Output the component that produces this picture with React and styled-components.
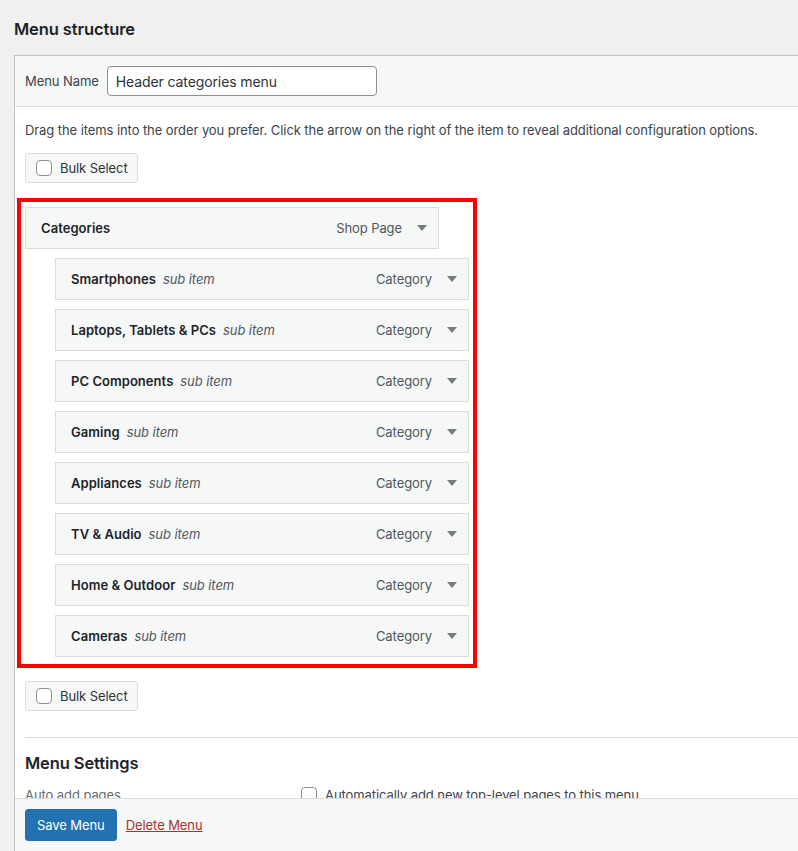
import React from "react";
import styled, { createGlobalStyle } from "styled-components";

const GlobalStyle = createGlobalStyle`
  html, body { margin: 0; padding: 0; }
  body {
    background: #f0f0f1;
    font-family: Inter, "Noto Sans", "Liberation Sans", sans-serif;
    font-size: 13px;
    letter-spacing: -0.08px;
    color: #3c434a;
    overflow: hidden;
  }
  * { box-sizing: border-box; }
`;

const Page = styled.div`
  height: 851px;
  display: flex;
  flex-direction: column;
  padding-left: 14px;
  overflow: hidden;
`;

const Title = styled.h2`
  margin: 18px 0 15px 0;
  font-size: 16.5px;
  line-height: 22px;
  font-weight: 600;
  letter-spacing: -0.1px;
  color: #1d2327;
`;

const Panel = styled.div`
  flex: 1;
  min-height: 0;
  display: flex;
  flex-direction: column;
  margin-right: -20px;
  border: 1px solid #c3c4c7;
  border-bottom: none;
  background: #fff;
`;

const Header = styled.div`
  display: flex;
  align-items: center;
  gap: 8px;
  padding: 10px;
  background: #f6f7f7;
  border-bottom: 1px solid #dcdcde;
`;

const Label = styled.label`
  font-size: 13px;
  color: #3c434a;
`;

const TextInput = styled.input`
  width: 270px;
  height: 30px;
  padding: 0 8px;
  border: 1px solid #8c8f94;
  border-radius: 4px;
  font-family: inherit;
  font-size: 14px;
  letter-spacing: -0.1px;
  color: #2c3338;
  background: #fff;
  outline: none;
`;

const Body = styled.div`
  flex: 1;
  min-height: 0;
  overflow: hidden;
  padding: 13px 0 0 10px;
`;

const Description = styled.p`
  margin: 0 0 13px;
  line-height: 20px;
  color: #3c434a;
`;

const BulkButton = styled.button`
  display: inline-flex;
  align-items: center;
  gap: 8px;
  height: 30px;
  padding: 0 9px 0 10px;
  background: #f6f7f7;
  border: 1px solid #dcdcde;
  border-radius: 3px;
  font-family: inherit;
  font-size: 13px;
  letter-spacing: -0.08px;
  color: #2c3338;
  margin-top: ${(p) => p.$top || 0}px;
`;

const Checkbox = styled.span`
  display: inline-block;
  width: 16px;
  height: 16px;
  border: 1px solid #8c8f94;
  border-radius: 4px;
  background: #fff;
  flex-shrink: 0;
`;

const Highlight = styled.div`
  width: 460px;
  margin: 15px 0 0 -8px;
  padding: 5px 4px 7px 4px;
  border: 4px solid #ff0000;
`;

const ItemList = styled.ul`
  list-style: none;
  margin: 0;
  padding: 0;
  display: flex;
  flex-direction: column;
  gap: 9px;
`;

const Item = styled.li`
  display: flex;
  align-items: center;
  width: 414px;
  height: 42px;
  margin-left: ${(p) => (p.$depth ? 30 : 0)}px;
  padding: 0 11px 1px 15px;
  background: #f6f7f7;
  border: 1px solid #dcdcde;
`;

const ItemTitle = styled.span`
  font-weight: 600;
  letter-spacing: 0.05px;
  color: #1d2327;
`;

const SubLabel = styled.span`
  margin-left: 7px;
  font-style: italic;
  color: #50575e;
`;

const ItemType = styled.span`
  margin-left: auto;
  color: #50575e;
`;

const Arrow = styled.svg`
  width: 10px;
  height: 6px;
  margin-left: 15px;
  fill: #787c82;
`;

const Separator = styled.hr`
  margin: 26px 0 0;
  border: none;
  border-top: 1px solid #dcdcde;
`;

const SectionTitle = styled.h3`
  margin: 14px 0 13px;
  font-size: 16.5px;
  line-height: 22px;
  font-weight: 600;
  letter-spacing: -0.1px;
  color: #1d2327;
`;

const SettingsRow = styled.div`
  display: grid;
  grid-template-columns: 276px 1fr;
  align-items: center;
  color: #646970;
`;

const CheckLabel = styled.label`
  display: flex;
  align-items: center;
  gap: 8px;
  color: #3c434a;
`;

const Footer = styled.div`
  display: flex;
  align-items: center;
  gap: 9px;
  padding: 10px;
  background: #f6f7f7;
  border-top: 1px solid #dcdcde;
`;

const PrimaryButton = styled.button`
  height: 32px;
  padding: 0 11px;
  background: #2271b1;
  border: 1px solid #2271b1;
  border-radius: 3px;
  color: #fff;
  font-family: inherit;
  font-size: 13px;
  letter-spacing: -0.08px;
`;

const DeleteLink = styled.a`
  color: #b32d2e;
  text-decoration: underline;
  font-size: 13px;
`;

const items = [
  "Smartphones",
  "Laptops, Tablets & PCs",
  "PC Components",
  "Gaming",
  "Appliances",
  "TV & Audio",
  "Home & Outdoor",
  "Cameras",
];

const DownArrow = () => (
  <Arrow viewBox="0 0 10 6">
    <path d="M0 0 L10 0 L5 6 Z" />
  </Arrow>
);

export default function App() {
  return (
    <>
      <GlobalStyle />
      <Page>
        <Title>Menu structure</Title>
        <Panel>
          <Header>
            <Label>Menu Name</Label>
            <TextInput defaultValue="Header categories menu" />
          </Header>
          <Body>
            <Description>
              Drag the items into the order you prefer. Click the arrow on the right of the item to reveal
              additional configuration options.
            </Description>
            <BulkButton>
              <Checkbox />
              Bulk Select
            </BulkButton>
            <Highlight>
              <ItemList>
                <Item>
                  <ItemTitle>Categories</ItemTitle>
                  <ItemType>Shop Page</ItemType>
                  <DownArrow />
                </Item>
                {items.map((name) => (
                  <Item key={name} $depth={1}>
                    <ItemTitle>{name}</ItemTitle>
                    <SubLabel>sub item</SubLabel>
                    <ItemType>Category</ItemType>
                    <DownArrow />
                  </Item>
                ))}
              </ItemList>
            </Highlight>
            <BulkButton $top={13}>
              <Checkbox />
              Bulk Select
            </BulkButton>
            <Separator />
            <SectionTitle>Menu Settings</SectionTitle>
            <SettingsRow>
              <span>Auto add pages</span>
              <CheckLabel>
                <Checkbox />
                Automatically add new top-level pages to this menu
              </CheckLabel>
            </SettingsRow>
          </Body>
          <Footer>
            <PrimaryButton>Save Menu</PrimaryButton>
            <DeleteLink href="#">Delete Menu</DeleteLink>
          </Footer>
        </Panel>
      </Page>
    </>
  );
}
